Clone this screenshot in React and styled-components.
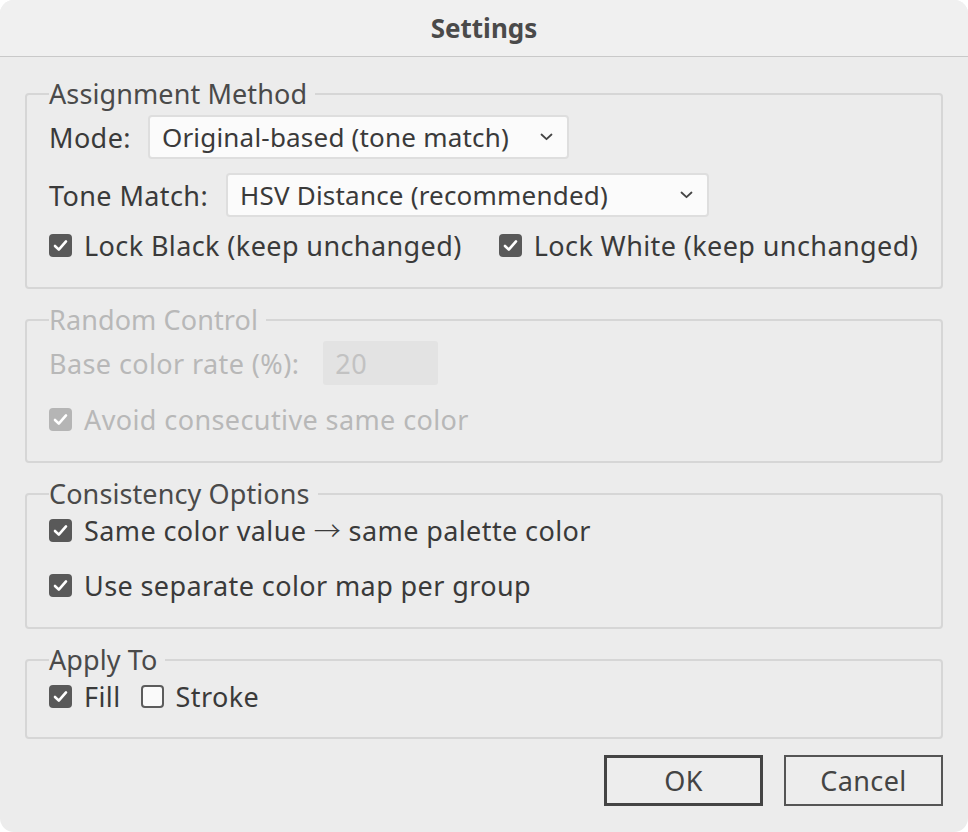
import React from 'react';
import styled, { createGlobalStyle } from 'styled-components';

const GlobalStyle = createGlobalStyle`
  html, body {
    margin: 0;
    padding: 0;
    background: #ffffff;
  }
  * { box-sizing: border-box; }
`;

const Window = styled.div`
  width: 968px;
  height: 832px;
  background: #ececec;
  border-radius: 14px;
  overflow: hidden;
  font-family: "Noto Sans", "Liberation Sans", Arial, sans-serif;
  color: #3a3a3a;
  display: flex;
  flex-direction: column;
`;

const TitleBar = styled.div`
  height: 57px;
  background: #f0f0f0;
  border-bottom: 1px solid #c9c9c9;
  display: flex;
  align-items: center;
  justify-content: center;
  font-size: 26px;
  font-weight: 700;
  color: #4a4a4a;
`;

const Body = styled.div`
  padding: 22px 25px 0;
  display: flex;
  flex-direction: column;
  gap: 16px;
`;

const Group = styled.fieldset`
  margin: 0;
  padding: 0 22px 0 22px;
  border: 2px solid #d6d6d6;
  border-radius: 4px;
  min-height: ${p => p.$h}px;
  display: flex;
  flex-direction: column;
`;

const Legend = styled.legend`
  padding: 0 8px 0 0;
  margin-left: 0;
  font-size: 27px;
  line-height: 30px;
  letter-spacing: 0.1px;
  color: ${p => (p.$disabled ? '#b8b8b8' : '#4a4a4a')};
`;

const Row = styled.div`
  display: flex;
  align-items: center;
  gap: ${p => p.$gap || 20}px;
  margin-top: ${p => p.$mt || 0}px;
  font-size: 27px;
  letter-spacing: 0.4px;
  color: ${p => (p.$disabled ? '#b8b8b8' : '#3a3a3a')};
`;

const SelectBox = styled.div`
  height: 44px;
  width: ${p => p.$w}px;
  background: #fbfbfb;
  border: 2px solid #dedede;
  border-radius: 4px;
  display: flex;
  align-items: center;
  justify-content: space-between;
  padding: 0 14px 0 12px;
  font-size: 26px;
  letter-spacing: 0.2px;
  color: #3a3a3a;
`;

const NumberField = styled.div`
  width: 115px;
  height: 44px;
  background: #e3e3e3;
  border-radius: 3px;
  display: flex;
  align-items: center;
  padding-left: 12px;
  color: #c2c2c2;
`;

const Check = styled.label`
  display: flex;
  align-items: center;
  gap: 12px;
  line-height: 37px;
  color: ${p => (p.$disabled ? '#b8b8b8' : '#3a3a3a')};
`;

const Box = styled.span`
  width: 23px;
  height: 23px;
  border-radius: 4px;
  display: flex;
  align-items: center;
  justify-content: center;
  background: ${p => (p.$checked ? (p.$disabled ? '#b5b5b5' : '#595959') : '#fafafa')};
  border: ${p => (p.$checked ? 'none' : '2px solid #5c5c5c')};
`;

const Arrow = styled.span`
  font-family: "Noto Sans CJK JP", sans-serif;
  font-weight: 300;
  line-height: 1;
`;

const Footer = styled.div`
  display: flex;
  justify-content: flex-end;
  gap: 21px;
  padding: 16px 25px 0;
`;

const Button = styled.button`
  width: 159px;
  height: 51px;
  background: #ededed;
  border: ${p => (p.$primary ? '3px solid #444' : '2px solid #555')};
  border-radius: 0;
  font-family: inherit;
  font-size: 27px;
  letter-spacing: 0.4px;
  color: #444;
`;

const Chevron = () => (
  <svg width="13" height="8" viewBox="0 0 13 8">
    <path d="M1.5 1.5 L6.5 6.2 L11.5 1.5" fill="none" stroke="#444" strokeWidth="1.8" strokeLinecap="round" strokeLinejoin="round" />
  </svg>
);

const CheckBox = ({ checked, disabled, children }) => (
  <Check $disabled={disabled}>
    <Box $checked={checked} $disabled={disabled}>
      {checked && (
        <svg width="15" height="13" viewBox="0 0 15 13">
          <path d="M2 7 L5.8 10.6 L13 2.4" fill="none" stroke="#fff" strokeWidth="2.6" strokeLinecap="round" strokeLinejoin="round" />
        </svg>
      )}
    </Box>
    <span>{children}</span>
  </Check>
);

export default function App() {
  return (
    <>
      <GlobalStyle />
      <Window>
        <TitleBar>Settings</TitleBar>
        <Body>
          <Group $h={210}>
            <Legend>Assignment Method</Legend>
            <Row $gap={17} $mt={6}>
              Mode:
              <SelectBox $w={421}>
                Original-based (tone match)
                <Chevron />
              </SelectBox>
            </Row>
            <Row $gap={18} $mt={14}>
              Tone Match:
              <SelectBox $w={483}>
                HSV Distance (recommended)
                <Chevron />
              </SelectBox>
            </Row>
            <Row $gap={37} $mt={10}>
              <CheckBox checked>Lock Black (keep unchanged)</CheckBox>
              <CheckBox checked>Lock White (keep unchanged)</CheckBox>
            </Row>
          </Group>

          <Group $h={158} disabled>
            <Legend $disabled>Random Control</Legend>
            <Row $disabled $gap={24} $mt={6}>
              Base color rate (%):
              <NumberField>20</NumberField>
            </Row>
            <Row $disabled $mt={16}>
              <CheckBox checked disabled>Avoid consecutive same color</CheckBox>
            </Row>
          </Group>

          <Group $h={150}>
            <Legend>Consistency Options</Legend>
            <Row $mt={3}>
              <CheckBox checked>Same color value <Arrow>→</Arrow> same palette color</CheckBox>
            </Row>
            <Row $mt={18}>
              <CheckBox checked>Use separate color map per group</CheckBox>
            </Row>
          </Group>

          <Group $h={94}>
            <Legend>Apply To</Legend>
            <Row $gap={20} $mt={3}>
              <CheckBox checked>Fill</CheckBox>
              <CheckBox>Stroke</CheckBox>
            </Row>
          </Group>
        </Body>
        <Footer>
          <Button $primary>OK</Button>
          <Button>Cancel</Button>
        </Footer>
      </Window>
    </>
  );
}
